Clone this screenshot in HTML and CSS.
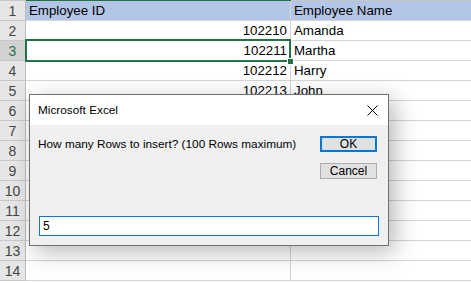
FILE: index.html
```html
<!DOCTYPE html>
<html>
<head>
<meta charset="utf-8">
<link rel="stylesheet" href="styles.css">
</head>
<body>
<div class="sheet">
  <div class="row head-row">
    <div class="rh">1</div><div class="cell b top-sel">Employee ID</div><div class="cell c">Employee Name</div>
  </div>
  <div class="row"><div class="rh">2</div><div class="cell b num">102210</div><div class="cell c">Amanda</div></div>
  <div class="row"><div class="rh active">3</div><div class="cell b num sel">102211</div><div class="cell c">Martha</div></div>
  <div class="row"><div class="rh">4</div><div class="cell b num">102212</div><div class="cell c">Harry</div></div>
  <div class="row"><div class="rh">5</div><div class="cell b num">102213</div><div class="cell c">John</div></div>
  <div class="row"><div class="rh">6</div><div class="cell b"></div><div class="cell c"></div></div>
  <div class="row"><div class="rh">7</div><div class="cell b"></div><div class="cell c"></div></div>
  <div class="row"><div class="rh">8</div><div class="cell b"></div><div class="cell c"></div></div>
  <div class="row"><div class="rh">9</div><div class="cell b"></div><div class="cell c"></div></div>
  <div class="row"><div class="rh">10</div><div class="cell b"></div><div class="cell c"></div></div>
  <div class="row"><div class="rh">11</div><div class="cell b"></div><div class="cell c"></div></div>
  <div class="row"><div class="rh">12</div><div class="cell b"></div><div class="cell c"></div></div>
  <div class="row"><div class="rh">13</div><div class="cell b"></div><div class="cell c"></div></div>
  <div class="row"><div class="rh">14</div><div class="cell b"></div><div class="cell c"></div></div>
</div>

<div class="dialog">
  <div class="titlebar">
    <span class="title">Microsoft Excel</span>
    <svg class="close" width="11" height="11" viewBox="0 0 11 11"><path d="M0.5 0.5 L10.5 10.5 M10.5 0.5 L0.5 10.5" stroke="#000" stroke-width="1" fill="none"/></svg>
  </div>
  <div class="dbody">
    <div class="dtop">
      <div class="msg">How many Rows to insert? (100 Rows maximum)</div>
      <div class="btns">
        <div class="btn ok">OK</div>
        <div class="btn">Cancel</div>
      </div>
    </div>
    <div class="input">5</div>
  </div>
</div>
</body>
</html>
```

FILE: styles.css
```css
html, body {
  margin: 0;
  padding: 0;
  width: 471px;
  height: 283px;
  overflow: hidden;
  background: #fff;
}
body {
  position: relative;
  font-family: "Liberation Sans", Arial, sans-serif;
}
.sheet {
  border-top: 1px solid #c8c8c8;
}
.row {
  display: flex;
  height: 19px;
  border-bottom: 1px solid #d4d4d4;
}
.rh {
  width: 25px;
  flex: none;
  background: #e6e6e6;
  border-right: 1px solid #bdbdbd;
  color: #444;
  font-size: 14px;
  line-height: 20px;
  text-align: center;
  margin-bottom: -1px;
  box-shadow: inset 0 -1px 0 #c8c8c8;
}
.rh.active {
  background: #d2d2d2;
  color: #217346;
}
.cell {
  font-size: 13.3px;
  line-height: 20px;
  color: #000;
  padding: 0 3px;
  box-sizing: border-box;
  white-space: nowrap;
  overflow: visible;
}
.cell.b {
  width: 265px;
  flex: none;
  border-right: 1px solid #d4d4d4;
}
.cell.c {
  flex: 1;
}
.cell.num {
  text-align: right;
}
.head-row .cell {
  background: #b4c6e7;
}
.top-sel {
  position: relative;
}
.top-sel::before {
  content: "";
  position: absolute;
  left: 0;
  right: -1px;
  top: -1px;
  height: 1px;
  background: #217346;
}
.sel {
  position: relative;
}
.sel::after {
  content: "";
  position: absolute;
  left: -1px;
  top: -2px;
  width: 266px;
  height: 23px;
  border: 2px solid #217346;
  box-sizing: border-box;
}
.sel::before {
  content: "";
  position: absolute;
  left: 261px;
  top: 17px;
  width: 5px;
  height: 5px;
  background: #217346;
  border: 1px solid #fff;
  z-index: 2;
}

.dialog {
  position: absolute;
  left: 29px;
  top: 94px;
  width: 358px;
  height: 150px;
  border: 1px solid #707070;
  background: #f0f0f0;
  box-shadow: 6px 6px 22px rgba(0, 0, 0, 0.28);
  display: flex;
  flex-direction: column;
  font-family: "Liberation Sans", Arial, sans-serif;
  font-size: 11.8px;
  color: #000;
}
.titlebar {
  height: 30px;
  background: #fff;
  display: flex;
  align-items: center;
  justify-content: space-between;
  padding: 0 10px 0 8px;
}
.title {
  font-size: 11.8px;
}
.close {
  display: block;
}
.dbody {
  flex: 1;
  display: flex;
  flex-direction: column;
  justify-content: space-between;
  padding: 11px 9px 9px 9px;
}
.dtop {
  display: flex;
  justify-content: space-between;
}
.msg {
  margin-left: -1px;
  line-height: 14px;
  margin-top: 1px;
}
.btns {
  display: flex;
  flex-direction: column;
  gap: 11px;
  margin-right: 2px;
}
.btn {
  width: 57px;
  height: 16px;
  box-sizing: border-box;
  border: 1px solid #adadad;
  background: #e1e1e1;
  text-align: center;
  line-height: 14px;
  font-size: 12px;
}
.btn.ok {
  border: 2px solid #0078d7;
  line-height: 12px;
}
.input {
  height: 20px;
  box-sizing: border-box;
  border: 1px solid #0078d7;
  background: #fff;
  padding-left: 3px;
  line-height: 18px;
  font-size: 12px;
}
```
